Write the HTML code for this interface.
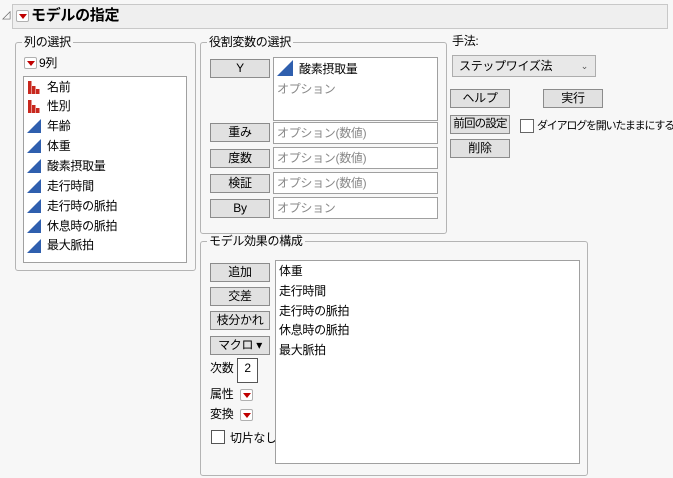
<!DOCTYPE html>
<html><head><meta charset="utf-8"><style>
*{box-sizing:border-box;margin:0;padding:0}
body{width:673px;height:478px;background:#f7f7f7;font-family:"Liberation Sans","Noto Sans CJK JP",sans-serif;font-size:12px;color:#000;position:relative;overflow:hidden;letter-spacing:-0.3px}
.a{position:absolute}
.grp{position:absolute;border:1px solid #b4b4b4;border-radius:3px}
.lbl{position:absolute;background:#f7f7f7;padding:0 2px;line-height:14px;top:-8px;left:6px}
.box{position:absolute;background:#fff;border:1px solid #a0a0a0}
.btn{position:absolute;background:#e1e1e1;border:1px solid #8c8c8c;text-align:center;line-height:17px;width:60px;height:19px;white-space:nowrap;overflow:hidden}
.dd{position:absolute;width:13px;height:12px;background:#fff;border:1px solid #b0b0b0;border-radius:2px}
.dd:after{content:"";position:absolute;left:2px;top:3px;border-left:4px solid transparent;border-right:4px solid transparent;border-top:5px solid #c00000}
.it{position:absolute;line-height:16px;white-space:nowrap}
.cb{position:absolute;width:14px;height:14px;background:#fff;border:1px solid #555}
.gray{color:#888}
</style></head><body>
<div class="a" style="left:2px;top:8px;font-size:11px;color:#666">◿</div>
<div class="a" style="left:12px;top:4px;width:656px;height:25px;background:#efefef;border:1px solid #c8c8c8"></div>
<div class="dd" style="left:16px;top:10px"></div>
<div class="a" style="left:31px;top:7px;font-size:15px;font-weight:bold;line-height:18px">モデルの指定</div>

<div class="grp" style="left:15px;top:42px;width:181px;height:229px"><div class="lbl">列の選択</div></div>
<div class="dd" style="left:24px;top:57px"></div>
<div class="it" style="left:39px;top:55px">9列</div>
<div class="box" style="left:23px;top:76px;width:164px;height:187px"></div>
<svg class="a" style="left:27px;top:80px" width="20" height="180">
<g fill="#c8281e"><rect x="1" y="1" width="3.5" height="13"/><rect x="5" y="6" width="3.5" height="8"/><rect x="9" y="9" width="3.5" height="5"/>
<rect x="1" y="20" width="3.5" height="13"/><rect x="5" y="25" width="3.5" height="8"/><rect x="9" y="28" width="3.5" height="5"/></g>
<g fill="#2f5fae"><polygon points="0,53 14,39 14,53"/><polygon points="0,73 14,59 14,73"/><polygon points="0,93 14,79 14,93"/><polygon points="0,113 14,99 14,113"/><polygon points="0,133 14,119 14,133"/><polygon points="0,153 14,139 14,153"/><polygon points="0,173 14,159 14,173"/></g>
</svg>
<div class="it" style="left:47px;top:79px">名前</div>
<div class="it" style="left:47px;top:98px">性別</div>
<div class="it" style="left:47px;top:118px">年齢</div>
<div class="it" style="left:47px;top:138px">体重</div>
<div class="it" style="left:47px;top:158px">酸素摂取量</div>
<div class="it" style="left:47px;top:178px">走行時間</div>
<div class="it" style="left:47px;top:198px">走行時の脈拍</div>
<div class="it" style="left:47px;top:218px">休息時の脈拍</div>
<div class="it" style="left:47px;top:237px">最大脈拍</div>

<div class="grp" style="left:200px;top:42px;width:247px;height:192px"><div class="lbl">役割変数の選択</div></div>
<div class="btn" style="left:210px;top:59px">Y</div>
<div class="box" style="left:273px;top:57px;width:165px;height:64px"></div>
<svg class="a" style="left:277px;top:60px" width="18" height="18"><polygon points="0,16 16,0 16,16" fill="#2f5fae"/></svg>
<div class="it" style="left:299px;top:61px">酸素摂取量</div>
<div class="it gray" style="left:277px;top:81px">オプション</div>
<div class="btn" style="left:210px;top:123px">重み</div>
<div class="box" style="left:273px;top:122px;width:165px;height:22px"></div><div class="it gray" style="left:277px;top:125px">オプション(数値)</div>
<div class="btn" style="left:210px;top:149px">度数</div>
<div class="box" style="left:273px;top:147px;width:165px;height:22px"></div><div class="it gray" style="left:277px;top:150px">オプション(数値)</div>
<div class="btn" style="left:210px;top:174px">検証</div>
<div class="box" style="left:273px;top:172px;width:165px;height:22px"></div><div class="it gray" style="left:277px;top:175px">オプション(数値)</div>
<div class="btn" style="left:210px;top:199px">By</div>
<div class="box" style="left:273px;top:197px;width:165px;height:22px"></div><div class="it gray" style="left:277px;top:200px">オプション</div>

<div class="it" style="left:452px;top:33px">手法:</div>
<div class="a" style="left:452px;top:55px;width:144px;height:22px;background:#e8e8e8;border:1px solid #adadad;padding-left:6px;line-height:20px">ステップワイズ法<span style="position:absolute;right:7px;top:0;font-size:9px;color:#555">⌄</span></div>
<div class="btn" style="left:450px;top:89px">ヘルプ</div>
<div class="btn" style="left:543px;top:89px">実行</div>
<div class="btn" style="left:450px;top:115px;height:19px;letter-spacing:-0.8px;font-size:11.5px">前回の設定</div>
<div class="cb" style="left:520px;top:119px;border-color:#666"></div>
<div class="it" style="left:537px;top:118px;font-size:11px;letter-spacing:-1.2px">ダイアログを開いたままにする</div>
<div class="btn" style="left:450px;top:139px">削除</div>

<div class="grp" style="left:200px;top:241px;width:388px;height:235px"><div class="lbl">モデル効果の構成</div></div>
<div class="btn" style="left:210px;top:263px">追加</div>
<div class="btn" style="left:210px;top:287px">交差</div>
<div class="btn" style="left:210px;top:311px">枝分かれ</div>
<div class="btn" style="left:210px;top:336px">マクロ ▾</div>
<div class="it" style="left:210px;top:360px">次数</div>
<div class="box" style="left:237px;top:358px;width:21px;height:25px;border-color:#555;text-align:center;line-height:18px">2</div>
<div class="it" style="left:210px;top:386px">属性</div><div class="dd" style="left:240px;top:389px"></div>
<div class="it" style="left:210px;top:406px">変換</div><div class="dd" style="left:240px;top:409px"></div>
<div class="cb" style="left:211px;top:430px"></div>
<div class="it" style="left:230px;top:430px">切片なし</div>
<div class="box" style="left:275px;top:260px;width:305px;height:204px"></div>
<div class="it" style="left:279px;top:263px">体重</div>
<div class="it" style="left:279px;top:283px">走行時間</div>
<div class="it" style="left:279px;top:303px">走行時の脈拍</div>
<div class="it" style="left:279px;top:322px">休息時の脈拍</div>
<div class="it" style="left:279px;top:342px">最大脈拍</div>
</body></html>
